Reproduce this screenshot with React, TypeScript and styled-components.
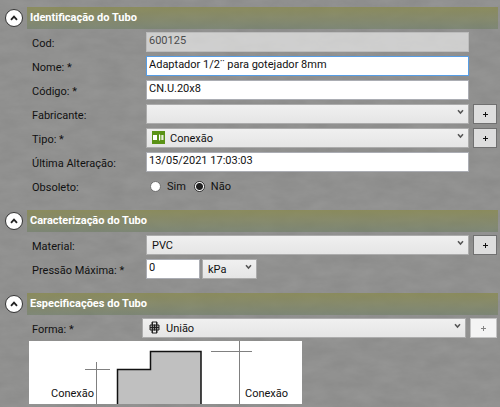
import React, { useState } from "react";
import styled, { createGlobalStyle } from "styled-components";

const GlobalStyle = createGlobalStyle`
  *, *::before, *::after { box-sizing: border-box; }
  body {
    margin: 0;
    background: #8e8e8d;
    color: #111;
    font: 11px/16px Roboto, "Open Sans", sans-serif;
  }
  button, input, select { font: inherit; color: inherit; margin: 0; border-radius: 0; }
`;

const Page = styled.main`
  position: relative;
  isolation: isolate;
  min-height: 100vh;
  display: flex;
  flex-direction: column;
  gap: 12px;
  padding: 7px 2px 2px 5px;
`;

const Texture = styled.svg`
  position: absolute;
  inset: 0;
  z-index: -1;
  width: 100%;
  height: 100%;
`;

const Group = styled.section`
  display: flex;
  flex-direction: column;
`;

const GroupHeader = styled.header`
  display: grid;
  grid-template-columns: 18px 1fr;
  column-gap: 4px;
  align-items: center;
  height: 22px;
`;

const Toggle = styled.button`
  width: 18px;
  height: 18px;
  padding: 0;
  display: grid;
  place-items: center;
  border: 1px solid #333;
  border-radius: 50%;
  background: #fff;
`;

const Title = styled.h2`
  margin: 0;
  padding-left: 3px;
  font-size: 11px;
  font-weight: 700;
  line-height: 22px;
  color: #fff;
  background: linear-gradient(rgba(136, 137, 72, 0.7), rgba(128, 134, 82, 0.6) 45%, rgba(106, 124, 92, 0.5));
`;

const Body = styled.div`
  display: flex;
  flex-direction: column;
  padding: 1px 1px 0 27px;
`;

const Row = styled.div<{ $wideButton?: boolean }>`
  display: grid;
  grid-template-columns: ${(p) => (p.$wideButton ? "110px 1fr 27px" : "114px 1fr 24px")};
  align-items: center;
  height: 24px;
`;

const Caption = styled.label`
  padding-top: 3px;
  white-space: nowrap;
`;

const Field = styled.div`
  display: flex;
  gap: 2px;
  min-width: 0;
  margin-right: 4px;
`;

const TextBox = styled.input<{ $narrow?: boolean }>`
  width: ${(p) => (p.$narrow ? "54px" : "100%")};
  min-width: 0;
  height: 20px;
  padding: 0 2px 3px 2px;
  border: 1px solid #abadb3;
  background: #fff;
  outline: none;

  &:focus { border-color: #569de5; }
  &:disabled {
    color: #4c4c4c;
    background: rgba(255, 255, 255, 0.56);
    border-color: #bcbcbc;
  }
`;

const SelectBox = styled.div<{ $narrow?: boolean }>`
  display: grid;
  align-items: center;
  width: ${(p) => (p.$narrow ? "55px" : "100%")};
  min-width: 0;

  & > * { grid-area: 1 / 1; }
  & > svg { pointer-events: none; z-index: 1; }
`;

const Select = styled.select<{ $icon?: boolean }>`
  appearance: none;
  width: 100%;
  height: 20px;
  padding: 2px 16px 0 ${(p) => (p.$icon ? "23px" : "5px")};
  border: 1px solid #acacac;
  background: linear-gradient(#f0f0f0, #e5e5e5);
  outline: none;
`;

const Glyph = styled.svg`
  margin: 0 0 2px 6px;
`;

const Chevron = styled.svg`
  justify-self: end;
  margin: 0 5px 4px 0;
`;

const AddButton = styled.button`
  height: 20px;
  padding: 1px 0 0;
  display: grid;
  place-items: center;
  border: 1px solid #707070;
  background: #dddddd;

  &:disabled {
    border-color: #c4c4c4;
    background: #f4f4f4;
    color: #838383;
  }
`;

const Choices = styled.div`
  display: flex;
  gap: 8px;
  padding: 1px 0 0 4px;
`;

const Choice = styled.label`
  display: flex;
  align-items: center;
  gap: 6px;
`;

const Radio = styled.input`
  appearance: none;
  width: 11px;
  height: 11px;
  border: 1px solid #707070;
  border-radius: 50%;
  background: #fff;

  &:checked {
    border-color: #333;
    background: radial-gradient(circle, #212121 0 3px, #fff 4px);
  }
`;

const Figure = styled.figure`
  width: 273px;
  margin: 1px 0 0 -3px;
  background: #fff;

  svg { display: block; }
`;

const Arrow = () => (
  <Chevron width="7" height="6" viewBox="0 0 7 6" aria-hidden="true">
    <path d="M1 1.2 L3.5 4 L6 1.2" fill="none" stroke="#555" strokeWidth="1.5" />
  </Chevron>
);

const Plus = ({ label, disabled }: { label: string; disabled?: boolean }) => (
  <AddButton type="button" aria-label={label} disabled={disabled}>
    <svg width="7" height="7" viewBox="0 0 7 7" aria-hidden="true">
      <path d="M3.5 1 V6 M1 3.5 H6" stroke="currentColor" fill="none" />
    </svg>
  </AddButton>
);

const ConnectionGlyph = () => (
  <Glyph width="13" height="13" viewBox="0 0 13 13" aria-hidden="true">
    <rect width="13" height="13" fill="#5a9216" />
    <rect x="1" y="4" width="4" height="5" fill="#fff" />
    <path d="M7.5 3.5 V9.5" stroke="#fff" />
    <path d="M8.5 4 H11.5 V9 H8.5 Z" fill="#e8f0dc" />
    <path d="M9 4 V9" stroke="#5a9216" strokeWidth="0.6" />
  </Glyph>
);

const UnionGlyph = () => (
  <Glyph width="13" height="13" viewBox="0 0 13 13" aria-hidden="true">
    <path d="M4 1 H9 V12 H4 Z" fill="#eee" stroke="#222" />
    <path d="M2 4 H11 V9 H2 Z" fill="#999" stroke="#222" />
    <path d="M4.5 1 V12 M8.5 1 V12 M2 6.5 H11 M6.5 3.5 V9.5" stroke="#222" />
  </Glyph>
);

type SectionProps = { title: string; children: React.ReactNode };

const Section = ({ title, children }: SectionProps) => {
  const [open, setOpen] = useState(true);
  return (
    <Group>
      <GroupHeader>
        <Toggle type="button" aria-label={title} aria-expanded={open} onClick={() => setOpen(!open)}>
          <svg width="8" height="6" viewBox="0 0 8 6" aria-hidden="true">
            <path d={open ? "M1 4.8 L4 1.6 L7 4.8" : "M1 1.2 L4 4.4 L7 1.2"} fill="none" stroke="#222" strokeWidth="1.8" />
          </svg>
        </Toggle>
        <Title>{title}</Title>
      </GroupHeader>
      {open && <Body>{children}</Body>}
    </Group>
  );
};

const ConnectionDrawing = () => (
  <Figure>
    <svg width="273" height="63" viewBox="0 0 273 63" role="img" aria-label="Conexão">
      <path d="M88.5 64 V28.5 H121.5 V10.5 H172 V64" fill="#c0c0c0" stroke="#111" strokeWidth="1.5" />
      <path d="M56 28.5 H81 M67.5 21 V63 M182 10.5 H223 M210.5 0 V63" stroke="#808080" fill="none" />
      <text x="22" y="56" fill="#111">Conexão</text>
      <text x="216" y="56" fill="#111">Conexão</text>
    </svg>
  </Figure>
);

export default function App() {
  const [name, setName] = useState("Adaptador 1/2¨ para gotejador 8mm");
  const [obsolete, setObsolete] = useState(false);

  return (
    <>
      <GlobalStyle />
      <Page>
        <Texture aria-hidden="true">
          <filter id="concrete" x="0" y="0" width="100%" height="100%" colorInterpolationFilters="sRGB">
            <feTurbulence type="fractalNoise" baseFrequency="0.04 0.09" numOctaves="5" seed="8" />
            <feColorMatrix values="0.05 0 0 0 0.54  0.05 0 0 0 0.54  0.05 0 0 0 0.536  0 0 0 0 1" />
          </filter>
          <rect width="100%" height="100%" filter="url(#concrete)" />
        </Texture>

        <Section title="Identificação do Tubo">
          <Row>
            <Caption htmlFor="cod">Cod:</Caption>
            <Field><TextBox id="cod" defaultValue="600125" disabled /></Field>
          </Row>
          <Row>
            <Caption htmlFor="nome">Nome: *</Caption>
            <Field>
              <TextBox id="nome" value={name} autoFocus onChange={(e) => setName(e.target.value)} />
            </Field>
          </Row>
          <Row>
            <Caption htmlFor="codigo">Código: *</Caption>
            <Field><TextBox id="codigo" defaultValue="CN.U.20x8" /></Field>
          </Row>
          <Row>
            <Caption htmlFor="fabricante">Fabricante:</Caption>
            <Field>
              <SelectBox>
                <Select id="fabricante"><option></option></Select>
                <Arrow />
              </SelectBox>
            </Field>
            <Plus label="Fabricante" />
          </Row>
          <Row>
            <Caption htmlFor="tipo">Tipo: *</Caption>
            <Field>
              <SelectBox>
                <Select id="tipo" $icon><option>Conexão</option></Select>
                <ConnectionGlyph />
                <Arrow />
              </SelectBox>
            </Field>
            <Plus label="Tipo" />
          </Row>
          <Row>
            <Caption htmlFor="alteracao">Última Alteração:</Caption>
            <Field><TextBox id="alteracao" defaultValue="13/05/2021 17:03:03" /></Field>
          </Row>
          <Row>
            <Caption as="span" id="obsoleto">Obsoleto:</Caption>
            <Choices role="radiogroup" aria-labelledby="obsoleto">
              <Choice>
                <Radio type="radio" name="obsoleto" checked={obsolete} onChange={() => setObsolete(true)} />
                Sim
              </Choice>
              <Choice>
                <Radio type="radio" name="obsoleto" checked={!obsolete} onChange={() => setObsolete(false)} />
                Não
              </Choice>
            </Choices>
          </Row>
        </Section>

        <Section title="Caracterização do Tubo">
          <Row>
            <Caption htmlFor="material">Material:</Caption>
            <Field>
              <SelectBox>
                <Select id="material"><option>PVC</option></Select>
                <Arrow />
              </SelectBox>
            </Field>
            <Plus label="Material" />
          </Row>
          <Row>
            <Caption htmlFor="pressao">Pressão Máxima: *</Caption>
            <Field>
              <TextBox id="pressao" defaultValue="0" $narrow />
              <SelectBox $narrow>
                <Select aria-label="Unidade"><option>kPa</option></Select>
                <Arrow />
              </SelectBox>
            </Field>
          </Row>
        </Section>

        <Section title="Especificações do Tubo">
          <Row $wideButton>
            <Caption htmlFor="forma">Forma: *</Caption>
            <Field>
              <SelectBox>
                <Select id="forma" $icon><option>União</option></Select>
                <UnionGlyph />
                <Arrow />
              </SelectBox>
            </Field>
            <Plus label="Forma" disabled />
          </Row>
          <ConnectionDrawing />
        </Section>
      </Page>
    </>
  );
}
